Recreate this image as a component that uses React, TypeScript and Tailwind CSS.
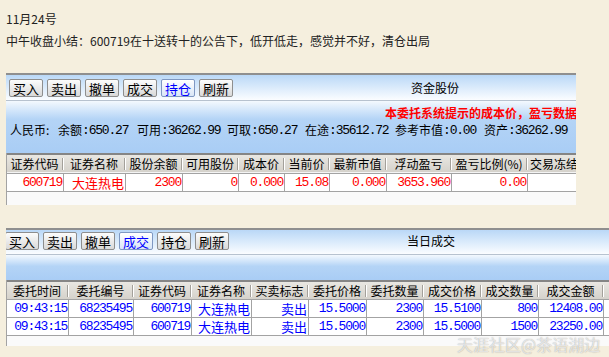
import React from "react";
import clsx from "clsx";

const cjk = "font-['Noto_Sans_CJK_SC',sans-serif]";
const mono =
  "font-['Liberation_Mono','Noto_Sans_CJK_SC',monospace] text-[13px] tracking-[-1.2px]";

const Btn = ({ label, active }: { label: string; active?: boolean }) => (
  <div
    className={clsx(
      "w-[34px] h-[18px] shrink-0 flex items-center justify-center rounded-[2px] border text-[13px] leading-none",
      active
        ? "border-[#7f98c2] bg-linear-to-b from-[#ffffff] to-[#d9e6f7] text-[#0000ff]"
        : "border-[#8e8e8e] bg-linear-to-b from-[#fcfcfc] to-[#d9d9d9] text-black"
    )}
  >
    {label}
  </div>
);

const Toolbar = ({
  active,
  title,
  shift,
}: {
  active: string;
  title: string;
  shift?: boolean;
}) => (
  <div
    className={clsx(
      "border-t-2 border-[#8f8f8f] bg-linear-to-b from-[#bad8f7] to-[#fbfdff] flex items-start shrink-0",
      shift ? "h-[26px] pt-[2px] pl-0" : "h-[27px] pt-[4px] pl-[3px]"
    )}
  >
    <div className={clsx("flex gap-[4px]", shift && "-ml-[1px]")}>
      {["买入", "卖出", "撤单", "成交", "持仓", "刷新"].map((b) => (
        <Btn key={b} label={b} active={b === active} />
      ))}
    </div>
    <div className="ml-[178px] text-[12px] leading-[18px] text-black">{title}</div>
  </div>
);

type Col = { w: string; h: string };

const HeaderRow = ({ cols }: { cols: Col[] }) => (
  <div className="h-[19px] border-t-2 border-[#858585] bg-linear-to-b from-[#e9e7e2] to-[#d5d2cb] flex items-center shrink-0">
    {cols.map((c, i) => (
      <div key={i} className={clsx(c.w, "shrink-0 flex items-center h-full")}>
        <span className="flex-1 text-center text-[12px] leading-none text-black whitespace-nowrap">
          {c.h}
        </span>
        <span className="w-[2px] h-[12px] border-l border-[#a3a09a] border-r border-r-white" />
      </div>
    ))}
  </div>
);

const DataRow = ({
  cols,
  cells,
  color,
  first,
}: {
  cols: Col[];
  cells: string[];
  color: string;
  first?: boolean;
}) => (
  <div
    className={clsx(
      "h-[18px] flex bg-white border-b border-[#a3a3a3] shrink-0",
      first && "h-[19px] border-t"
    )}
  >
    {cols.map((c, i) => {
      const v = cells[i] ?? "";
      const isCjk = /[\u4e00-\u9fff]/.test(v);
      return (
        <div
          key={i}
          className={clsx(
            c.w,
            "shrink-0 border-r border-[#a3a3a3] flex items-center justify-end pr-[1px] whitespace-nowrap overflow-hidden",
            color,
            isCjk ? "text-[13px] leading-none" : mono
          )}
        >
          {v}
        </div>
      );
    })}
  </div>
);

const cols1: Col[] = [
  { w: "w-[57px]", h: "证券代码" },
  { w: "w-[62px]", h: "证券名称" },
  { w: "w-[57px]", h: "股份余额" },
  { w: "w-[56px]", h: "可用股份" },
  { w: "w-[46px]", h: "成本价" },
  { w: "w-[45px]", h: "当前价" },
  { w: "w-[57px]", h: "最新市值" },
  { w: "w-[65px]", h: "浮动盈亏" },
  { w: "w-[76px]", h: "盈亏比例(%)" },
  { w: "w-[54px]", h: "交易冻结" },
];

const cols2: Col[] = [
  { w: "w-[62px]", h: "委托时间" },
  { w: "w-[65px]", h: "委托编号" },
  { w: "w-[58px]", h: "证券代码" },
  { w: "w-[60px]", h: "证券名称" },
  { w: "w-[57px]", h: "买卖标志" },
  { w: "w-[58px]", h: "委托价格" },
  { w: "w-[57px]", h: "委托数量" },
  { w: "w-[58px]", h: "成交价格" },
  { w: "w-[57px]", h: "成交数量" },
  { w: "w-[65px]", h: "成交金额" },
  { w: "w-[40px]", h: "" },
];

const trades = [
  ["09:43:15", "68235495", "600719", "大连热电", "卖出", "15.5000", "2300", "15.5100", "800", "12408.00", ""],
  ["09:43:15", "68235495", "600719", "大连热电", "卖出", "15.5000", "2300", "15.5000", "1500", "23250.00", ""],
];

const Info = ({ label, value, cls }: { label: string; value: string; cls: string }) => (
  <div className={clsx("shrink-0 flex items-center whitespace-nowrap", cls)}>
    <span className="text-[12px] leading-none">{label}</span>
    <span className={clsx(mono, "leading-none")}>:{value}</span>
  </div>
);

export default function App() {
  return (
    <div
      className={clsx(
        "w-[609px] h-[357px] bg-[#f5efde] overflow-hidden relative flex flex-col",
        cjk
      )}
    >
      <div className="pt-[8px] pl-[6px] text-[12px] leading-[22px] text-[#222]">
        <div>11月24号</div>
        <div>中午收盘小结：600719在十送转十的公告下，低开低走，感觉并不好，清仓出局</div>
      </div>

      {/* 资金股份 */}
      <div className="mt-[21px] ml-[6px] w-[570px] h-[132px] flex flex-col overflow-hidden shrink-0">
        <Toolbar active="持仓" title="资金股份" />
        <div className="h-px bg-[#b7c2cf] shrink-0" />
        <div className="h-[52px] shrink-0 bg-linear-to-b from-[#f4f9fe] via-[#b4d4f6] via-35% to-[#a9cdf5] flex flex-col overflow-hidden">
          <div className="pt-[4px] pl-[379px] h-[20px] leading-[16px] text-[12px] font-bold text-[#ff0000] whitespace-nowrap">
            本委托系统提示的成本价，盈亏数据仅供参考
          </div>
          <div className="mt-[1px] h-[16px] pl-[4px] flex items-center text-black">
            <div className="shrink-0 text-[12px] leading-none whitespace-nowrap w-[48px]">人民币:</div>
            <Info label="余额" value="650.27" cls="w-[79px]" />
            <Info label="可用" value="36262.99" cls="w-[90px]" />
            <Info label="可取" value="650.27" cls="w-[78px]" />
            <Info label="在途" value="35612.72" cls="w-[90px]" />
            <Info label="参考市值" value="0.00" cls="w-[89px]" />
            <Info label="资产" value="36262.99" cls="w-[91px]" />
            <span className={clsx(mono, "shrink-0 leading-none")}>:</span>
          </div>
        </div>
        <div className="flex-1 flex flex-col border-l border-[#a3a3a3] bg-[#fafafa]">
          <HeaderRow cols={cols1} />
          <div className="h-px bg-[#f4f4f4] shrink-0" />
          <DataRow
            cols={cols1}
            first
            color="text-[#ff0000]"
            cells={["600719", "大连热电", "2300", "0", "0.000", "15.08", "0.000", "3653.960", "0.00", ""]}
          />
        </div>
      </div>

      {/* 当日成交 */}
      <div className="mt-[23px] ml-[6px] w-[603px] h-[118px] flex flex-col overflow-hidden shrink-0">
        <Toolbar active="成交" title="当日成交" shift />
        <div className="h-px bg-[#b7c2cf] shrink-0" />
        <div className="h-[25px] shrink-0 bg-linear-to-b from-[#f4f9fe] via-[#b4d4f6] via-45% to-[#a9cdf5]" />
        <div className="flex-1 flex flex-col border-l border-[#a3a3a3] bg-[#fafafa]">
          <HeaderRow cols={cols2} />
          {trades.map((r, i) => (
            <DataRow key={i} cols={cols2} cells={r} first={i === 0} color="text-[#0000ff]" />
          ))}
        </div>
      </div>

      <div className="absolute left-[457px] top-[334px] text-[16px] leading-[20px] text-white/70 [text-shadow:0_0_1px_rgba(90,90,90,0.6)] whitespace-nowrap">
        天涯社区@茶语湖边
      </div>
    </div>
  );
}
